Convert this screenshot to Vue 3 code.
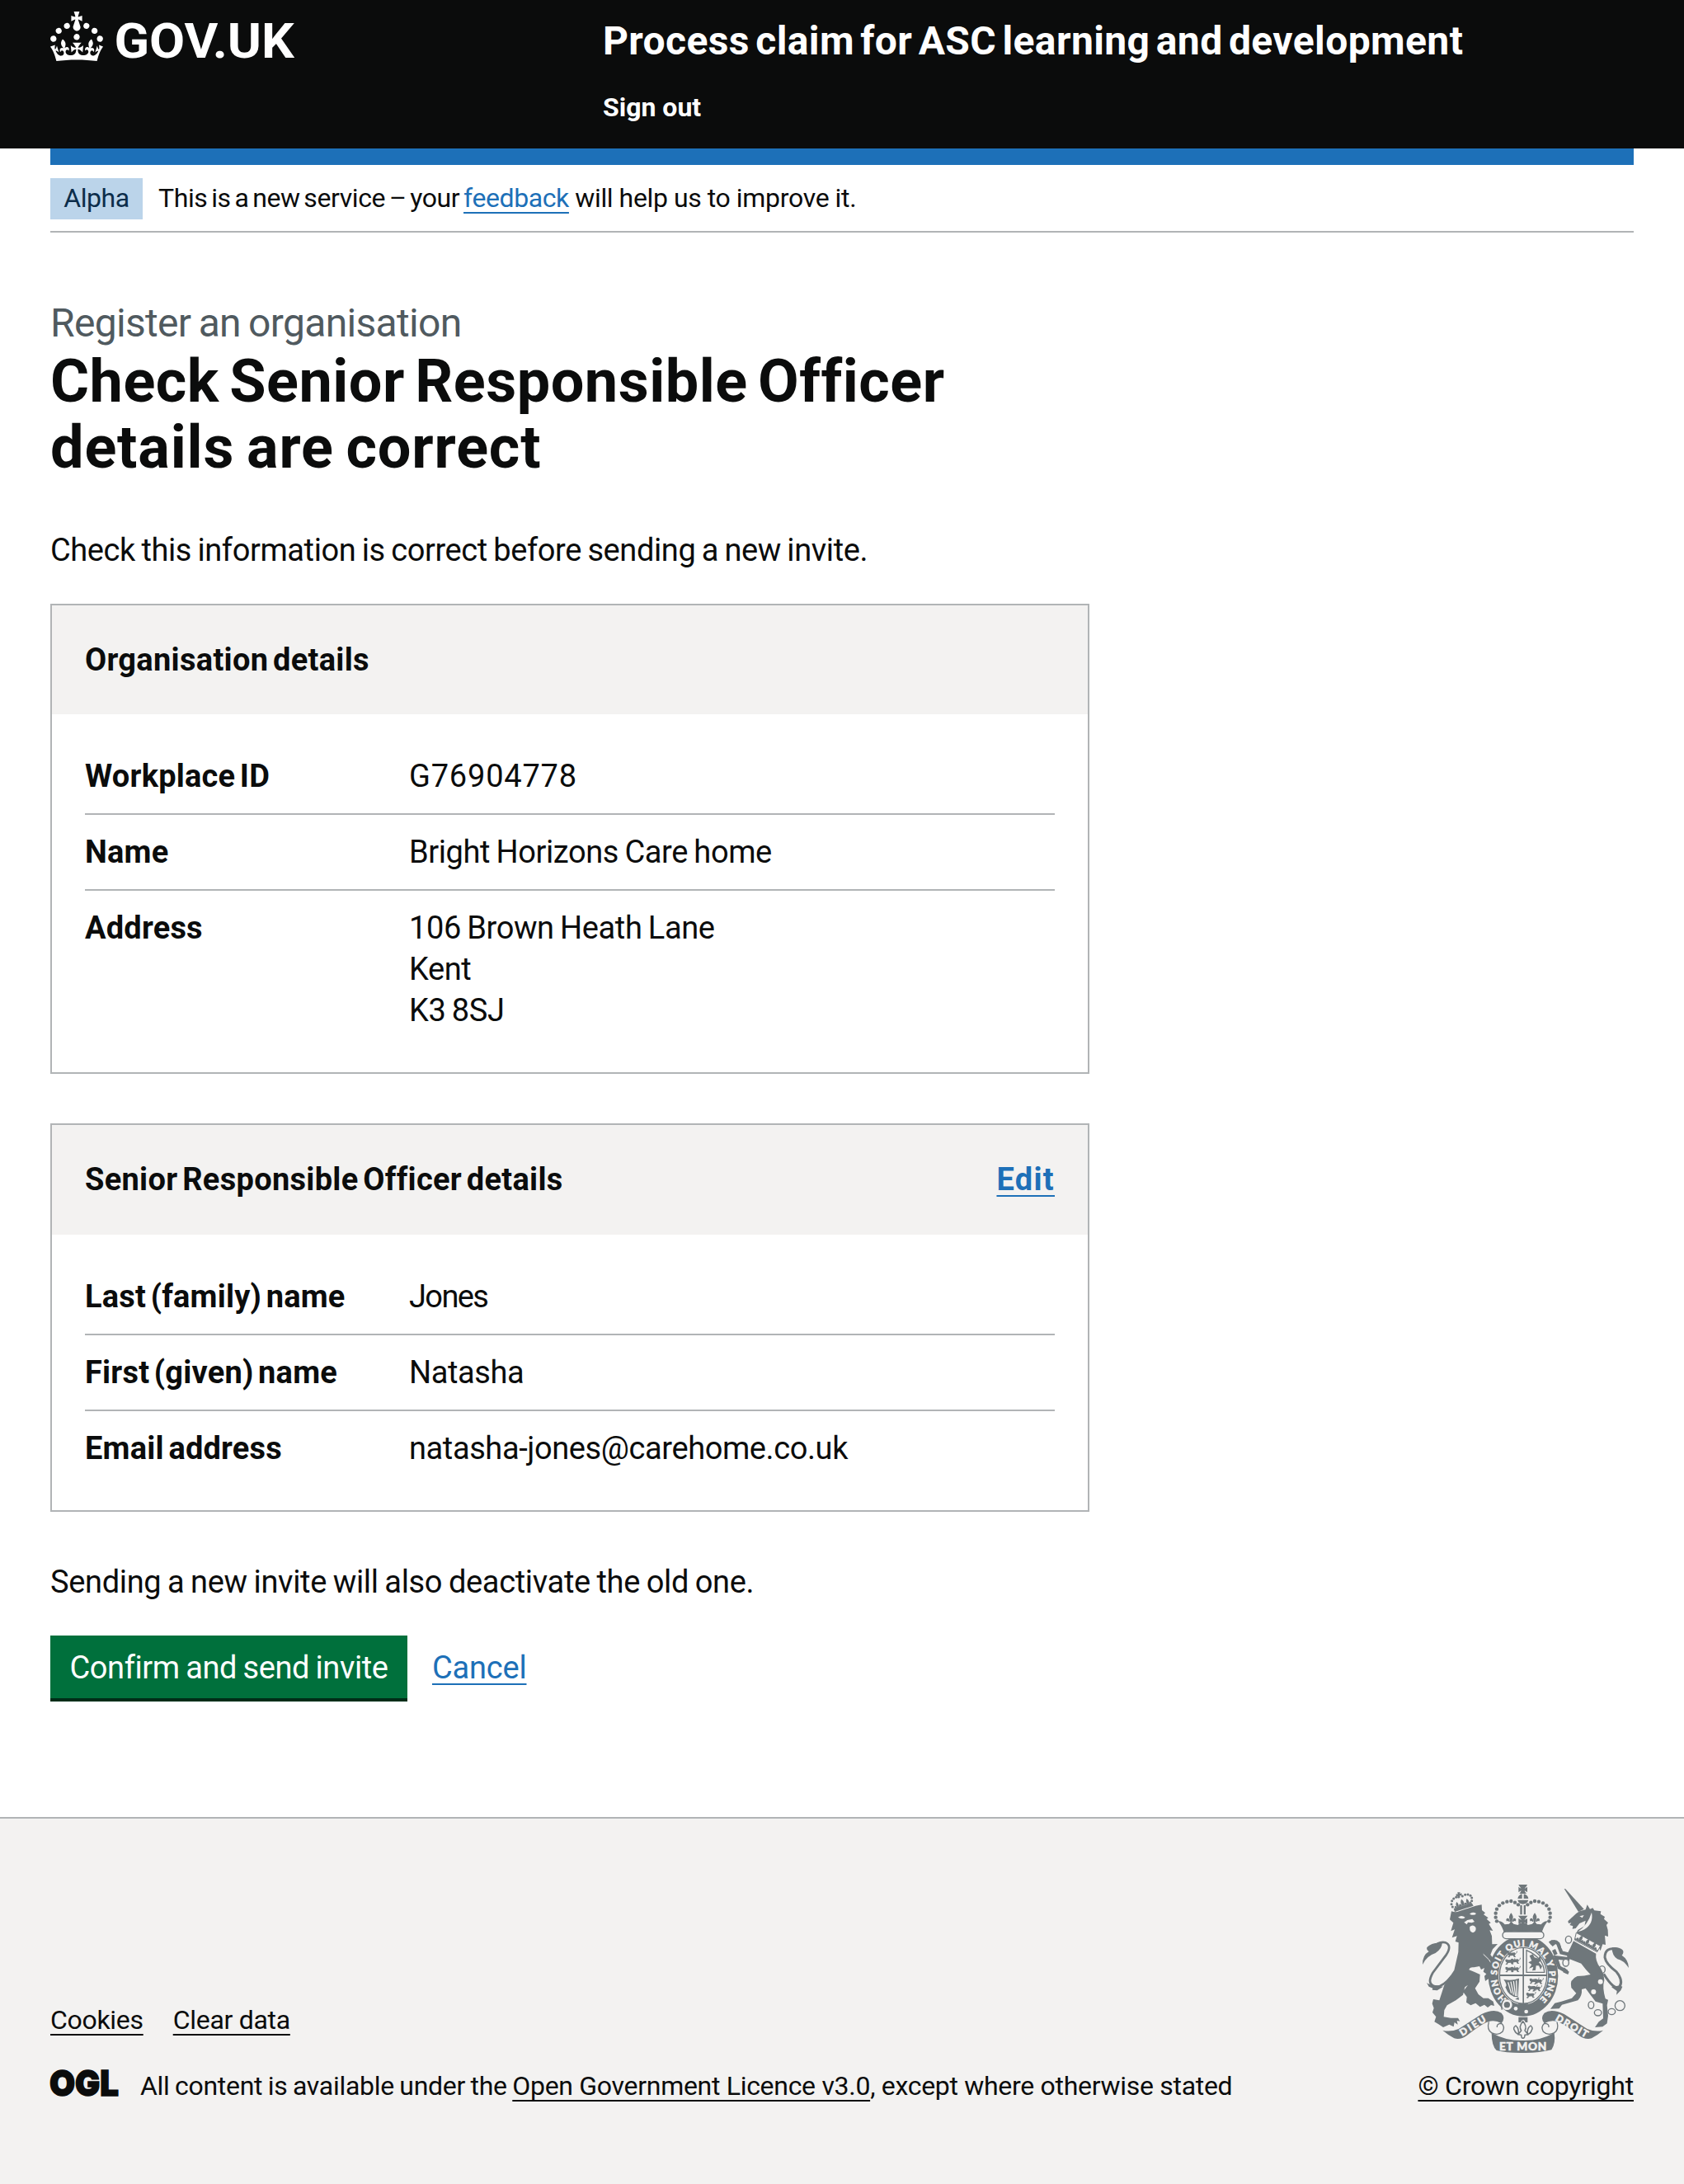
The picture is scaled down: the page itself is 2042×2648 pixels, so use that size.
<script setup>
const cards = [
  {
    title: 'Organisation details',
    rows: [
      { key: 'Workplace ID', lines: ['G76904778'], numeric: true },
      { key: 'Name', lines: ['Bright Horizons Care home'] },
      { key: 'Address', lines: ['106 Brown Heath Lane', 'Kent', 'K3 8SJ'] },
    ],
  },
  {
    title: 'Senior Responsible Officer details',
    action: 'Edit',
    rows: [
      { key: 'Last (family) name', lines: ['Jones'], tight: true },
      { key: 'First (given) name', lines: ['Natasha'] },
      { key: 'Email address', lines: ['natasha-jones@carehome.co.uk'] },
    ],
  },
]

// Pearls along the left arch of the crown; the right arch mirrors them.
const pearls = [[345, 208], [341, 194], [341, 179], [345, 164], [354, 151], [367, 142], [382, 137], [397, 135], [411, 140], [423, 148]]
const smallPearls = [[184, 156], [180, 146], [182, 134], [188, 126], [197, 121], [206, 120], [220, 117], [230, 112], [240, 111], [249, 115], [254, 123], [254, 134]]
</script>

<template>
  <div class="page">
    <header class="header">
      <div class="container header-row">
        <a class="logo" href="#">
          <svg viewBox="0 0 152 30" width="304" height="60" role="img" aria-label="GOV.UK">
            <path fill="#fff" d="M22.6 10.4c-1 .4-2-.1-2.4-1-.4-.9.1-2 1-2.4.9-.4 2 .1 2.4 1s-.1 2-1 2.4m-5.9 6.7c-.9.4-2-.1-2.4-1-.4-.9.1-2 1-2.4.9-.4 2 .1 2.4 1s-.1 2-1 2.4m10.8-3.7c-1 .4-2-.1-2.4-1-.4-.9.1-2 1-2.4.9-.4 2 .1 2.4 1s0 2-1 2.4m3.3 4.8c-1 .4-2-.1-2.4-1-.4-.9.1-2 1-2.4.9-.4 2 .1 2.4 1s-.1 2-1 2.4M17 4.7l2.3 1.2V2.5l-2.3.7-.2-.2.9-3h-3.4l.9 3-.2.2c-.1.1-2.3-.7-2.3-.7v3.4L15 4.7c.1.1.1.2.2.2l-1.3 4c-.1.2-.1.4-.1.6 0 1.1.8 2 1.9 2.2h.7c1-.2 1.9-1.1 1.9-2.1 0-.2 0-.4-.1-.6l-1.3-4c-.1-.2 0-.2.1-.3m-7.6 5.7c.9.4 2-.1 2.4-1 .4-.9-.1-2-1-2.4-.9-.4-2 .1-2.4 1s0 2 1 2.4m-5 3c.9.4 2-.1 2.4-1 .4-.9-.1-2-1-2.4-.9-.4-2 .1-2.4 1s.1 2 1 2.4m-3.2 4.8c.9.4 2-.1 2.4-1 .4-.9-.1-2-1-2.4-.9-.4-2 .1-2.4 1s0 2 1 2.4m14.8 11c4.4 0 8.6.3 12.3.8 1.1-4.5 2.4-7 3.7-8.8l-2.5-.9c.2 1.3.3 1.9 0 2.7-.4-.4-.8-1.1-1.1-2.3l-1.2 4c.7-.5 1.3-.8 2-.9-1.1 2.5-2.6 3.1-3.5 3-1.1-.2-1.7-1.2-1.5-2.1.3-1.2 1.5-1.5 2.1-.1 1.1-2.3-.8-3-2-2.3 1.9-1.9 2.1-3.5.6-5.6-2.1 1.6-2.1 3.2-1.2 5.5-1.2-1.4-3.2-.6-2.5 1.6.9-1.4 2.1-.5 1.9.8-.2 1.1-1.7 2.1-3.5 1.9-2.7-.2-2.9-2.1-2.9-3.6.7-.1 1.9.5 2.9 1.9l.4-4.3c-1.1 1.1-2.1 1.4-3.2 1.4.4-1.2 2.1-3 2.1-3h-5.4s1.7 1.9 2.1 3c-1.1 0-2.1-.2-3.2-1.4l.4 4.3c1-1.4 2.2-2 2.9-1.9-.1 1.5-.2 3.4-2.9 3.6-1.9.2-3.4-.8-3.5-1.9-.2-1.3 1-2.2 1.9-.8.7-2.3-1.2-3-2.5-1.6.9-2.2.9-3.9-1.2-5.5-1.5 2-1.3 3.7.6 5.6-1.2-.7-3.1 0-2 2.3.6-1.4 1.8-1.1 2.1.1.2.9-.3 1.9-1.5 2.1-.9.2-2.4-.5-3.5-3 .6 0 1.2.3 2 .9l-1.2-4c-.3 1.1-.7 1.9-1.1 2.3-.3-.8-.2-1.4 0-2.7l-2.9.9C1.3 23 2.6 25.5 3.7 30c3.7-.5 7.9-.8 12.3-.8" />
            <text class="logo-text" x="38.7" y="28" textLength="109.2" lengthAdjust="spacingAndGlyphs">GOV.UK</text>
          </svg>
        </a>
        <div class="header-content">
          <a class="service" href="#">Process claim for ASC learning and development</a>
          <a class="signout" href="#">Sign out</a>
        </div>
      </div>
    </header>

    <div class="container">
      <div class="phase">
        <strong class="tag">Alpha</strong>
        <span><span class="phase-lead">This is a new service – your </span><a class="link" href="#">feedback</a><span class="phase-tail"> will help us to improve it.</span></span>
      </div>

      <main class="main">
        <span class="caption">Register an organisation</span>
        <h1 class="heading">
          <span class="heading-line">Check Senior Responsible Officer</span>
          <span class="heading-line wide">details are correct</span>
        </h1>
        <p class="body">Check this information is correct before sending a new invite.</p>

        <section v-for="card in cards" :key="card.title" class="card">
          <div class="card-head">
            <h2 class="card-title">{{ card.title }}</h2>
            <a v-if="card.action" class="link card-action" href="#">{{ card.action }}</a>
          </div>
          <dl class="list">
            <div v-for="row in card.rows" :key="row.key" class="row">
              <dt class="key">{{ row.key }}</dt>
              <dd class="value" :class="{ numeric: row.numeric, tight: row.tight }">
                <span v-for="line in row.lines" :key="line" class="line">{{ line }}</span>
              </dd>
            </div>
          </dl>
        </section>

        <p class="body after">Sending a new invite will also deactivate the old one.</p>
        <div class="actions">
          <button class="button" type="button">Confirm and send invite</button>
          <a class="link cancel" href="#">Cancel</a>
        </div>
      </main>
    </div>

    <footer class="footer">
      <div class="container footer-row">
        <div>
          <nav class="footer-links">
            <a class="dark-link" href="#">Cookies</a>
            <a class="dark-link" href="#">Clear data</a>
          </nav>
          <div class="licence">
            <svg class="ogl" viewBox="0 0 82 34" width="82" height="34" role="img" aria-label="Open Government Licence">
              <text class="ogl-text" x="-1" y="32.4" textLength="84" lengthAdjust="spacingAndGlyphs">OGL</text>
            </svg>
            <span><span class="licence-lead">All content is available under the </span><a class="dark-link" href="#">Open Government Licence v3.0</a>, except where otherwise stated</span>
          </div>
        </div>
        <div class="copyright">
          <svg class="arms" viewBox="75 75 750 612" width="250" height="204" aria-hidden="true">
            <defs>
              <path id="motto" d="M381 491A95 108 0 1 1 501 491" />
              <g id="fleur">
                <path d="M0-16Q-9-5-5 4L-3 12H3L5 4Q9-5 0-16ZM-4 12Q-5 0-12 1-18 4-14 11-10 8-7 12ZM4 12Q5 0 12 1 18 4 14 11 10 8 7 12Z" />
              </g>
              <g id="lionlet">
                <path d="M-16-8Q-10-12-6-7L10-8 14-3 10 3 15 8 8 9 4 3-6 4-9 10-16 9-10 3-15-1Z" />
                <path d="M13-4Q21-8 18-13" fill="none" stroke="#6f777b" stroke-width="2.5" />
              </g>
            </defs>
            <g fill="#6f777b">
              <!-- lion -->
              <path d="M174 202 180 172Q196 178 208 172L268 152 290 148 291 168 303 178 297 184 314 196 308 200 323 214 316 218 331 243 319 241 327 262 328 292 348 291 330 310 322 330 336 348 348 380 354 412Q355 428 346 428L336 420 330 433 318 430 314 418 303 426 300 408 307 400 296 392 300 378 288 384 282 372 262 376Q246 374 244 385 262 392 284 402L282 428 266 452 278 474 296 488 314 488 332 500 336 516 324 513 312 522 300 512 284 520 268 506 250 514 234 503 236 484 222 464 240 440 229 448 222 476 196 496 164 514 154 532 152 556 178 560 204 560 211 572 200 570 203 584 191 576 188 592 172 584 150 594 132 582 118 574 124 556 111 540 116 524 110 508 114 492 136 496 154 440 190 386 205 320 206 286 194 282 200 262 182 268 192 238 178 244 187 214Z" />
              <path d="M296 328Q318 344 334 376" fill="none" stroke="#f3f2f1" stroke-width="3" />
              <g fill="#f3f2f1">
                <path d="M204 194Q216 184 230 194 222 204 204 194ZM246 182Q256 172 270 180 264 190 246 182Z" />
                <path d="M226 212 238 204 256 200 264 210 254 214 240 212 236 220ZM247 228Q258 218 268 230 272 246 258 250 244 246 247 228Z" />
              </g>
              <path d="M180 408Q140 458 112 442 92 432 112 396L160 332Q184 296 158 286 146 282 128 290" fill="none" stroke="#6f777b" stroke-width="8" />
              <path d="M75 366Q74 332 98 318 88 312 91 303 110 284 146 288 146 308 122 324 90 334 75 366ZM90 432Q100 440 126 442L150 446 128 460 110 458 112 452 98 446Z" />
              <circle v-for="(p, i) in smallPearls" :key="'s' + i" :cx="p[0]" :cy="p[1]" r="4.5" />
              <path d="M188 162 254 142 260 152 192 174ZM202 103 212 103 210 109 217 106 218 116 211 114 211 122 203 124 203 116 197 118 197 109 203 110Z" />
              <use href="#fleur" transform="translate(202 150) rotate(-15) scale(.8)" />
              <use href="#fleur" transform="translate(220 142) rotate(-15) scale(.9)" />
              <use href="#fleur" transform="translate(239 138) rotate(-15) scale(.8)" />

              <!-- crown -->
              <g v-for="side in [1, -1]" :key="side" :transform="side === 1 ? '' : 'translate(880 0) scale(-1 1)'">
                <circle v-for="(p, i) in pearls" :key="i" :cx="p[0]" :cy="p[1]" r="6.6" />
                <path d="M350 208Q362 206 374 220L390 218 397 208 406 218 422 222 430 214 441 222V248Q400 242 370 250 370 236 350 208Z" />
                <use href="#fleur" transform="translate(397 196) scale(1.15)" />
              </g>
              <path d="M424 75H456Q450 86 446 89 451 87 456 83V103Q450 99 446 97 448 104 453 108H427Q432 104 434 97 430 99 424 103V83Q429 87 434 89 430 86 424 75ZM421 126Q424 112 437 109V126ZM443 109Q458 112 460 126H443ZM421 131H460Q456 144 440 146 424 144 421 131ZM430 150H437V184H430ZM443 150H450V184H443ZM423 188H457Q448 200 445 204L456 198V218L445 212 450 222H430L435 212 424 218V198L435 204Q432 200 423 188Z" />

              <!-- garter -->
              <ellipse cx="441" cy="407" rx="127" ry="147" />
              <rect x="366" y="246" width="150" height="26" rx="13" fill="#f3f2f1" stroke="#6f777b" stroke-width="4" />
              <ellipse cx="441" cy="406" rx="90" ry="106" fill="#f3f2f1" />
              <ellipse cx="441" cy="406" rx="86" ry="102" fill="none" stroke="#6f777b" stroke-width="4" />
              <path d="M439 306H444V508H439ZM354 402H528V408H354ZM420 506 462 506 452 514H430Z" />
              <text class="motto ring"><textPath href="#motto" textLength="506" lengthAdjust="spacing">HON SOIT QUI MAL Y PENSE</textPath></text>
              <use href="#lionlet" x="400" y="330" /><use href="#lionlet" x="392" y="356" /><use href="#lionlet" x="392" y="384" />
              <use href="#lionlet" x="412" y="384" /><use href="#lionlet" x="412" y="354" />
              <use href="#lionlet" x="480" y="426" /><use href="#lionlet" x="474" y="452" /><use href="#lionlet" x="468" y="478" />
              <use href="#lionlet" x="496" y="428" /><use href="#lionlet" x="490" y="454" />
              <path d="M453 318V394H518Q516 342 453 314Z" fill="none" stroke="#6f777b" stroke-width="4" />
              <path d="M464 334 476 328 482 340 496 344 502 332 506 350 498 358 510 372 504 384 498 370 488 370 486 386 474 388 478 374 462 380 472 366 460 358 472 352Z" />
              <path d="M370 420Q400 426 426 416L422 484Q390 486 376 448 386 442 370 420ZM424 484 426 494 412 492Z" />
              <path d="M386 430 398 470M396 428 406 476M406 426 413 480M416 424 418 480" stroke="#f3f2f1" stroke-width="4" />
              <circle cx="382" cy="512" r="15" fill="#6f777b" stroke="#f3f2f1" stroke-width="8" />
              <path d="M364 530Q356 510 372 492" fill="none" stroke="#6f777b" stroke-width="4" />
              <circle cx="414" cy="526" r="7" fill="#f3f2f1" /><circle cx="452" cy="537" r="7" fill="#f3f2f1" />

              <!-- unicorn -->
              <path d="M590 90 595 91 662 164 642 174Z" />
              <path d="M604 208 634 180 646 172 668 166 674 148 684 164 694 160 700 169 724 172 722 182 738 192 735 200 750 214 744 222 749 240 750 264 738 260 741 294 730 292 722 316 714 296 634 252 640 240 664 226 668 206 646 216 632 234 620 236 622 226 610 222 616 214 606 216Z" />
              <path d="M690 176Q698 216 664 238 650 246 640 246 676 222 690 176ZM646 190 662 186 656 196Z" fill="#f3f2f1" />
              <path d="M634 250 722 298 710 320 628 276Z" fill="#f3f2f1" stroke="#6f777b" stroke-width="3" />
              <path d="M630 272 712 316" stroke="#6f777b" stroke-width="5" />
              <use href="#fleur" transform="translate(650 272) rotate(28) scale(.9)" />
              <use href="#fleur" transform="translate(674 285) rotate(28) scale(.9)" />
              <use href="#fleur" transform="translate(698 298) rotate(28) scale(.9)" />
              <path d="M624 280 706 326Q702 352 722 378 734 396 736 424 728 448 740 490L750 494 746 514 750 552 746 580 730 592 702 594 716 574 732 562 730 508 704 500 684 474 668 452 654 456Q656 480 640 496L582 512 572 526 540 527 556 506 580 500 618 488 634 470 616 450Q608 420 638 408 664 408 686 402 668 384 652 362L606 344Q596 338 604 322L612 306Z" />
              <path d="M612 330 580 322 568 290Q556 276 538 288M610 346 560 340 572 376 600 392M560 330 552 312" fill="none" stroke="#6f777b" stroke-width="13" />
              <path d="M534 284 548 300 560 290 546 276ZM590 376 608 392 604 402 586 394Z" />
              <g fill="none" stroke="#6f777b" stroke-width="4">
                <ellipse cx="606" cy="275" rx="11" ry="13" /><ellipse cx="728" cy="384" rx="11" ry="13" />
                <ellipse cx="688" cy="513" rx="10" ry="13" /><ellipse cx="713" cy="541" rx="13" ry="11" />
                <ellipse cx="763" cy="537" rx="13" ry="11" /><circle cx="793" cy="515" r="18" />
              </g>
              <g fill="#f3f2f1">
                <circle cx="722" cy="428" r="9" /><circle cx="697" cy="465" r="9" />
                <ellipse cx="587" cy="299" rx="8" ry="10" />
                <ellipse cx="596" cy="359" rx="11" ry="13" stroke="#6f777b" stroke-width="4" />
              </g>
              <path d="M782 310Q738 300 738 340 742 364 780 392 806 424 792 446 772 462 734 400" fill="none" stroke="#6f777b" stroke-width="9" />
              <path d="M764 304Q790 300 804 314 808 322 800 332 824 348 825 378 806 350 784 346 764 334 764 304ZM762 448 792 442 802 446 796 460 780 476 782 462Z" />

              <!-- ribbon -->
              <g v-for="side in [1, -1]" :key="'r' + side" :transform="side === 1 ? '' : 'translate(880 0) scale(-1 1)'">
                <path d="M148 605Q176 612 206 600L290 546Q336 524 362 542 378 560 362 580 338 566 314 574 290 582 236 624 214 640 190 634 168 622 148 605Z" />
                <path d="M316 574Q308 602 326 614 350 626 366 610 376 592 362 580 344 580 346 594" fill="none" stroke="#6f777b" stroke-width="4" />
              </g>
              <path d="M326 614Q380 644 440 642 500 644 554 614 560 650 544 676 500 688 440 687 380 688 344 678 326 660 326 614Z" />
              <text class="motto" x="354" y="679" textLength="172">ET MON</text>
              <text class="motto side" transform="translate(219 627) rotate(-32)" textLength="106">DIEU</text>
              <text class="motto side" transform="translate(556 568) rotate(30)" textLength="130">DROIT</text>

              <!-- pendant -->
              <path d="M424 557H457V576H449Q448 568 441 566 434 568 432 576H424Z" />
              <path d="M440 572Q424 590 434 606 428 614 424 618 426 598 414 588 402 596 410 606 412 614 424 620L434 622Q434 634 440 634 447 634 447 622L458 620Q470 614 472 604 478 596 468 588 454 598 457 618 452 612 447 606 456 590 440 572Z" fill="none" stroke="#6f777b" stroke-width="4.5" />
            </g>
          </svg>
          <a class="dark-link crown-link" href="#">© Crown copyright</a>
        </div>
      </div>
    </footer>
  </div>
</template>

<style>
body {
  background: #fff;
}
</style>

<style scoped>
.page {
  width: 2042px;
  height: 2648px;
  display: flex;
  flex-direction: column;
  overflow: hidden;
  color: #0b0c0c;
  font-family: Roboto, sans-serif;
  font-size: 38px;
  line-height: 50px;
  letter-spacing: -0.4px;
  word-spacing: -1.6px;
  font-variant-ligatures: none;
}

.container {
  width: 1920px;
  margin: 0 auto;
}

a {
  text-decoration: none;
}

.link,
.dark-link {
  color: #1d70b8;
  text-decoration: underline;
  text-decoration-thickness: 2px;
  text-underline-offset: 6px;
  text-decoration-skip-ink: none;
}

.dark-link {
  color: #0b0c0c;
}

.header {
  height: 180px;
  background: #0b0c0c;
}

.header-row {
  display: flex;
  height: 180px;
  border-bottom: 20px solid #1d70b8;
}

.logo {
  width: 670px;
  padding-top: 14px;
}

.logo svg {
  display: block;
}

.logo-text {
  fill: #fff;
  font-size: 29.6px;
  font-weight: 700;
  letter-spacing: 0;
}

.header-content {
  display: flex;
  flex-direction: column;
  padding-top: 20px;
  gap: 30px;
}

.header-content a {
  color: #fff;
  font-weight: 700;
}

.service {
  font-size: 48px;
  line-height: 60px;
  letter-spacing: 0.4px;
  word-spacing: -5px;
}

.signout {
  font-size: 32px;
  line-height: 40px;
  letter-spacing: 0;
  word-spacing: 0;
}

.phase {
  display: flex;
  margin-top: 20px;
  padding: 20px 0;
  border-bottom: 2px solid #b1b4b6;
  font-size: 32px;
  line-height: 40px;
}

.tag {
  width: 112px;
  margin: -4px 19px -6px 0;
  padding: 4px 0 6px;
  background: #bbd4ea;
  color: #0c2d4a;
  font-weight: 400;
  text-align: center;
}

.phase-lead {
  word-spacing: -2.8px;
}

.phase-tail {
  letter-spacing: -0.3px;
  word-spacing: -0.4px;
}

.main {
  padding: 80px 0 140px;
}

.caption {
  display: block;
  padding-bottom: 1px;
  color: #505a5f;
  font-size: 48px;
  line-height: 60px;
  letter-spacing: -0.68px;
  word-spacing: -2px;
}

.heading {
  margin: 0 0 59px;
  font-size: 72px;
  line-height: 80px;
}

.heading-line {
  display: block;
  letter-spacing: 0.5px;
  word-spacing: -6px;
}

.heading-line.wide {
  letter-spacing: 0.85px;
  word-spacing: -4px;
}

.body {
  margin: 0 0 40px;
}

.card {
  width: 1256px;
  margin-bottom: 60px;
  border: 2px solid #b1b4b6;
}

.card-head {
  display: flex;
  justify-content: space-between;
  align-items: center;
  height: 132px;
  padding: 0 40px;
  background: #f3f2f1;
  font-weight: 700;
  letter-spacing: 0.3px;
  word-spacing: -4px;
}

.card + .card .card-head {
  height: 133px;
}

.card-title {
  margin: 0;
  padding-bottom: 1px;
  font-size: 38px;
}

.card-action {
  padding-bottom: 1px;
  letter-spacing: 1.3px;
}

.list {
  margin: 0;
  padding: 30px 40px;
}

.row {
  display: flex;
  padding: 20px 0;
  border-bottom: 2px solid #b1b4b6;
}

.row:last-child {
  border-bottom: 0;
}

.key {
  width: 393px;
  font-weight: 700;
  letter-spacing: 0.2px;
  word-spacing: -4px;
}

.value {
  margin: 0;
}

.numeric {
  letter-spacing: 0.8px;
}

.tight {
  letter-spacing: -1.6px;
}

.line {
  display: block;
}

.after {
  letter-spacing: -0.33px;
  word-spacing: -1.4px;
}

.actions {
  display: flex;
  align-items: flex-start;
  gap: 30px;
  line-height: 78px;
}

.button {
  width: 433px;
  height: 80px;
  padding: 0 0 2px;
  border: 0;
  background: #00703c;
  box-shadow: inset 0 -4px 0 #002d18;
  color: #fff;
  font: inherit;
  letter-spacing: inherit;
  word-spacing: inherit;
  text-align: center;
}

.cancel {
  height: 80px;
  letter-spacing: -0.2px;
}

.footer {
  flex: 1;
  border-top: 2px solid #b1b4b6;
  background: #f3f2f1;
  font-size: 32px;
  line-height: 40px;
  letter-spacing: -0.3px;
  word-spacing: 0;
}

.footer-row {
  display: flex;
  justify-content: space-between;
  align-items: flex-end;
  padding-top: 80px;
}

.footer-links {
  display: flex;
  gap: 36px;
  margin-bottom: 40px;
}

.licence {
  display: flex;
}

.licence-lead {
  word-spacing: -1.1px;
}

.ogl {
  margin-right: 27px;
  overflow: visible;
}

.ogl-text {
  fill: #0b0c0c;
  stroke: #0b0c0c;
  stroke-width: 1.5px;
  font-family: Inter, sans-serif;
  font-size: 43px;
  font-weight: 900;
  letter-spacing: 0;
}

.copyright {
  display: flex;
  flex-direction: column;
  align-items: center;
}

.crown-link {
  letter-spacing: -0.2px;
}

.arms {
  margin-bottom: 20px;
  overflow: visible;
}

.motto {
  fill: #f3f2f1;
  stroke: #f3f2f1;
  stroke-width: 1.4px;
  font-family: Lato, sans-serif;
  font-size: 41px;
  font-weight: 900;
  letter-spacing: 0;
  word-spacing: 0;
}

.side {
  font-size: 36px;
}

.ring {
  font-size: 32px;
}
</style>
